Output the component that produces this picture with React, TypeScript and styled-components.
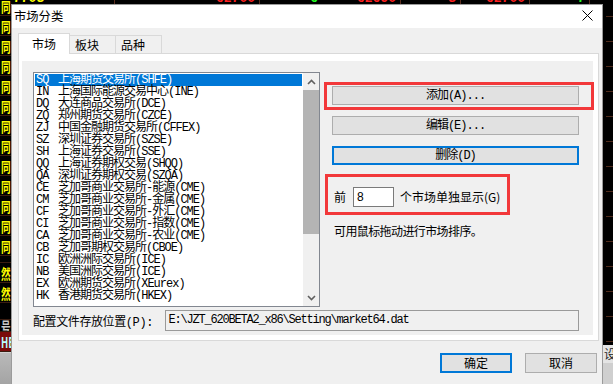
import React from 'react';
import styled, { createGlobalStyle } from 'styled-components';

const GlobalStyle = createGlobalStyle`
  html, body {
    margin: 0;
    padding: 0;
    background: #000;
    overflow: hidden;
  }
  * { box-sizing: border-box; }
`;

const SANS = `"Noto Sans CJK SC", "Noto Sans", sans-serif`;
const MIXED = `"Liberation Mono", "Noto Sans CJK SC", monospace`;

const markets: [string, string][] = [
  ['SQ', '上海期货交易所(SHFE)'],
  ['IN', '上海国际能源交易中心(INE)'],
  ['DQ', '大连商品交易所(DCE)'],
  ['ZQ', '郑州期货交易所(CZCE)'],
  ['ZJ', '中国金融期货交易所(CFFEX)'],
  ['SZ', '深圳证券交易所(SZSE)'],
  ['SH', '上海证券交易所(SSE)'],
  ['QQ', '上海证券期权交易(SHQQ)'],
  ['QA', '深圳证券期权交易(SZQA)'],
  ['CE', '芝加哥商业交易所-能源(CME)'],
  ['CM', '芝加哥商业交易所-金属(CME)'],
  ['CF', '芝加哥商业交易所-外汇(CME)'],
  ['CI', '芝加哥商业交易所-指数(CME)'],
  ['CA', '芝加哥商业交易所-农业(CME)'],
  ['CB', '芝加哥期权交易所(CBOE)'],
  ['IC', '欧洲洲际交易所(ICE)'],
  ['NB', '美国洲际交易所(ICE)'],
  ['EX', '欧洲期货交易所(XEurex)'],
  ['HK', '香港期货交易所(HKEX)'],
];

// the trading screen peeking out behind the dialog
const leftRows: { text: string; h: number; color: string; bg?: string }[] = [
  ...Array.from({ length: 13 }, () => ({ text: '同', h: 20, color: '#ffff00' })),
  { text: '', h: 7, color: '#ffff00' },
  { text: '然', h: 20, color: '#ffff00' },
  { text: '然', h: 20, color: '#ffff00' },
  { text: '', h: 17, color: '#ffff00' },
  { text: '号', h: 12, color: '#c8c8c8' },
  { text: 'HE', h: 20, color: '#b8ffff', bg: '#7a0b0b' },
];

const quoteCells: { w: number; parts: { t: string; c: string }[]; pad?: number }[] = [
  { w: 104, parts: [{ t: '7703', c: '#ffff00' }, { t: ' *', c: '#ff2020' }], pad: 2 },
  { w: 145, parts: [{ t: '62700', c: '#ff2020' }] },
  { w: 141, parts: [{ t: '6', c: '#20ff20' }, { t: '*    62690', c: '#ff2020' }] },
  { w: 60, parts: [{ t: '3', c: '#ff2020' }] },
  { w: 69, parts: [{ t: '62700', c: '#ff2020' }] },
  { w: 60, parts: [{ t: '7', c: '#20ff20' }] },
];

const Screen = styled.div`
  display: grid;
  grid-template-columns: 11px 592px 10px;
  grid-template-rows: 4px 380px;
  width: 613px;
  height: 384px;
  overflow: hidden;
  background: #000;
  position: relative;
`;

const LeftStrip = styled.div`
  grid-column: 1;
  grid-row: 1 / 3;
  display: flex;
  flex-direction: column;
  overflow: hidden;
  background: #000;
`;

const LeftRows = styled.div`
  display: flex;
  flex-direction: column;
  margin-top: -4px;
`;

const LeftCell = styled.div<{ $h: number; $color: string; $bg?: string }>`
  height: ${p => p.$h}px;
  padding-left: 1px;
  display: flex;
  align-items: center;
  color: ${p => p.$color};
  background: ${p => p.$bg || 'transparent'};
  border-bottom: 1px solid #3a1c10;
  overflow: hidden;
`;

const LeftGlyph = styled.span`
  display: inline-block;
  font-family: ${SANS};
  font-size: 12px;
  font-weight: bold;
  line-height: 12px;
  white-space: nowrap;
  transform: scale(0.8, 1.15);
  transform-origin: left center;
`;

const LeftFill = styled.div`
  flex: 1;
  background: linear-gradient(#b9b9b9, #a4a4a4);
  border-top: 1px solid #d0d0d0;
`;

const QuoteStrip = styled.div`
  grid-column: 2 / 4;
  grid-row: 1;
  display: flex;
  align-items: flex-end;
  overflow: hidden;
  background: #000;
`;

const QuoteCell = styled.div<{ $w: number; $pad?: number }>`
  flex: none;
  width: ${p => p.$w}px;
  height: 14px;
  margin-bottom: -2px;
  padding: 0 4px 0 ${p => p.$pad ?? 0}px;
  text-align: ${p => (p.$pad !== undefined ? 'left' : 'right')};
  border-right: 1px solid #5a2d1e;
  font-family: "Liberation Mono", monospace;
  font-weight: bold;
  font-size: 13px;
  line-height: 14px;
  white-space: pre;
`;

const QuotePart = styled.span<{ $c: string }>`
  color: ${p => p.$c};
`;

const RightStrip = styled.div`
  grid-column: 3;
  grid-row: 2;
  display: flex;
  flex-direction: column;
`;

const TickArea = styled.div`
  flex: 1;
  background-color: #000;
  background-image: linear-gradient(to bottom, #4e2a1a 0 1px, transparent 1px);
  background-size: 7px 25px;
  background-repeat: repeat-y;
  background-position: right 0 top 12px;
`;

const SetCell = styled.div`
  height: 18px;
  display: flex;
  align-items: center;
  background: #e4e4e4;
  color: #222;
  padding-left: 1px;
  overflow: hidden;
`;

const SetGlyph = styled.span`
  font-family: ${SANS};
  font-size: 12px;
  line-height: 12px;
  white-space: nowrap;
`;

const GrayFill = styled.div`
  height: 21px;
  background: #cfcfcf;
`;

const Dialog = styled.div`
  grid-column: 2;
  grid-row: 2;
  display: flex;
  flex-direction: column;
  background: #f0f0f0;
  border: 1px solid #9b9b9b;
  border-bottom: none;
  font-family: ${SANS};
  font-size: 12px;
  color: #000;
`;

const TitleBar = styled.div`
  height: 24px;
  display: flex;
  align-items: center;
  justify-content: space-between;
  background: #fff;
  padding: 0 9px 2px 2px;
`;

const Title = styled.span`
  font-size: 12.3px;
  line-height: 14px;
`;

const Body = styled.div`
  display: flex;
  flex-direction: column;
  padding: 5px 5px 0 6px;
`;

const TabStrip = styled.div`
  display: flex;
  align-items: flex-end;
  height: 20px;
`;

const Tab = styled.div<{ $active?: boolean; $w: number }>`
  position: relative;
  z-index: ${p => (p.$active ? 1 : 0)};
  width: ${p => p.$w}px;
  height: ${p => (p.$active ? 21 : 18)}px;
  margin-bottom: ${p => (p.$active ? -1 : 0)}px;
  background: ${p => (p.$active ? '#fff' : '#f0f0f0')};
  border: 1px solid #d9d9d9;
  border-bottom: none;
  border-left: ${p => (p.$active ? '1px solid #d9d9d9' : 'none')};
  display: flex;
  align-items: center;
  justify-content: ${p => (p.$active ? 'center' : 'flex-start')};
  padding-left: ${p => (p.$active ? 0 : 5)}px;
  font-size: 12px;
  line-height: 14px;
`;

const Panel = styled.div`
  width: 581px;
  border: 1px solid #d9d9d9;
  background: #fff;
  padding: 7px 5px 5px 3px;
`;

const Page = styled.div`
  position: relative;
  height: 274px;
  background: #f0f0f0;
  padding: 11px 0 0 11px;
  display: grid;
  grid-template-columns: 287px 247px;
  grid-template-rows: 235px auto;
  column-gap: 12px;
`;

const ListBox = styled.div`
  display: flex;
  border: 1px solid #828790;
  background: #fff;
  overflow: hidden;
`;

const Items = styled.div`
  flex: 1;
  padding: 1px 1px 0 1px;
  overflow: hidden;
`;

const Item = styled.div<{ $selected?: boolean }>`
  display: flex;
  height: 12px;
  line-height: 12px;
  padding-left: 1px;
  white-space: nowrap;
  font-family: ${MIXED};
  font-size: 12px;
  letter-spacing: -1px;
  background: ${p => (p.$selected ? '#0078d7' : 'transparent')};
  color: ${p => (p.$selected ? '#fff' : '#000')};
`;

const Code = styled.span`
  flex: none;
  width: 22px;
`;

const ScrollBar = styled.div`
  width: 16px;
  display: flex;
  flex-direction: column;
  background: #f0f0f0;
`;

const ScrollArrow = styled.div`
  height: 17px;
  display: flex;
  align-items: center;
  justify-content: center;
`;

const Thumb = styled.div`
  height: 144px;
  background: #b4b4b4;
`;

const Track = styled.div`
  flex: 1;
`;

const RightCol = styled.div`
  display: flex;
  flex-direction: column;
  padding-top: 14px;
`;

const Button = styled.div<{ $focus?: boolean }>`
  height: 19px;
  margin-bottom: 11px;
  display: flex;
  align-items: center;
  justify-content: center;
  background: #e1e1e1;
  border: ${p => (p.$focus ? '2px solid #0078d7' : '1px solid #adadad')};
  font-family: ${MIXED};
  font-size: 12px;
  letter-spacing: -1px;
  line-height: 12px;
  white-space: nowrap;
`;

const CountRow = styled.div`
  margin-top: 11px;
  height: 20px;
  display: flex;
  align-items: center;
  padding-left: 2px;
  line-height: 14px;
`;

const CountInput = styled.div`
  width: 41px;
  height: 20px;
  margin: 0 6px 0 7px;
  padding-left: 3px;
  background: #fff;
  border: 1px solid #7a7a7a;
  font-family: "Liberation Sans", sans-serif;
  font-size: 12px;
  line-height: 18px;
`;

const Hint = styled.div`
  margin-top: 18px;
  padding-left: 2px;
  line-height: 12px;
  letter-spacing: -0.6px;
`;

const ConfigRow = styled.div`
  grid-column: 1 / 3;
  margin-top: 3px;
  display: flex;
  align-items: center;
  height: 21px;
`;

const ConfigLabel = styled.span`
  width: 132px;
  font-family: ${MIXED};
  font-size: 12px;
  letter-spacing: -0.4px;
  white-space: nowrap;
`;

const PathField = styled.div`
  width: 416px;
  height: 21px;
  padding-left: 3px;
  background: #f0f0f0;
  border: 1px solid #9a9a9a;
  font-family: "Liberation Mono", monospace;
  font-size: 12px;
  letter-spacing: -1.2px;
  line-height: 19px;
  white-space: nowrap;
`;

const Footer = styled.div`
  display: flex;
  justify-content: flex-end;
  gap: 13px;
  margin-top: 12px;
`;

const FooterButton = styled(Button)`
  width: 72px;
  height: 20px;
  font-family: ${SANS};
  letter-spacing: 0;
  line-height: 14px;
`;

// red annotation boxes drawn over the screenshot
const Callout = styled.div<{ $x: number; $y: number; $w: number; $h: number }>`
  position: absolute;
  left: ${p => p.$x}px;
  top: ${p => p.$y}px;
  width: ${p => p.$w}px;
  height: ${p => p.$h}px;
  border: 3px solid #f2383a;
  pointer-events: none;
`;

const CloseIcon = () => (
  <svg width="11" height="11" viewBox="0 0 11 11">
    <path d="M0.5 0.5 L10.5 10.5 M10.5 0.5 L0.5 10.5" stroke="#000" strokeWidth="1" fill="none" />
  </svg>
);

const Chevron = ({ down }: { down?: boolean }) => (
  <svg width="9" height="6" viewBox="0 0 9 6">
    <polyline
      points={down ? '1,1 4.5,4.5 8,1' : '1,5 4.5,1.5 8,5'}
      stroke="#606060"
      strokeWidth="1.6"
      fill="none"
    />
  </svg>
);

export default function App() {
  return (
    <>
      <GlobalStyle />
      <Screen>
        <LeftStrip>
          <LeftRows>
            {leftRows.map((r, i) => (
              <LeftCell key={i} $h={r.h} $color={r.color} $bg={r.bg}>
                {r.text && <LeftGlyph>{r.text}</LeftGlyph>}
              </LeftCell>
            ))}
          </LeftRows>
          <LeftFill />
        </LeftStrip>

        <QuoteStrip>
          {quoteCells.map((c, i) => (
            <QuoteCell key={i} $w={c.w} $pad={c.pad}>
              {c.parts.map((p, j) => (
                <QuotePart key={j} $c={p.c}>{p.t}</QuotePart>
              ))}
            </QuoteCell>
          ))}
        </QuoteStrip>

        <Dialog>
          <TitleBar>
            <Title>市场分类</Title>
            <CloseIcon />
          </TitleBar>
          <Body>
            <TabStrip>
              <Tab $active $w={52}>市场</Tab>
              <Tab $w={46}>板块</Tab>
              <Tab $w={46}>品种</Tab>
            </TabStrip>
            <Panel>
              <Page>
                <ListBox>
                  <Items>
                    {markets.map(([code, name], i) => (
                      <Item key={code} $selected={i === 0}>
                        <Code>{code}</Code>
                        <span>{name}</span>
                      </Item>
                    ))}
                  </Items>
                  <ScrollBar>
                    <ScrollArrow><Chevron /></ScrollArrow>
                    <Thumb />
                    <Track />
                    <ScrollArrow><Chevron down /></ScrollArrow>
                  </ScrollBar>
                </ListBox>

                <RightCol>
                  <Button>添加(A)...</Button>
                  <Button>编辑(E)...</Button>
                  <Button $focus>删除(D)</Button>
                  <CountRow>
                    <span>前</span>
                    <CountInput>8</CountInput>
                    <span>个市场单独显示(G)</span>
                  </CountRow>
                  <Hint>可用鼠标拖动进行市场排序。</Hint>
                </RightCol>

                <ConfigRow>
                  <ConfigLabel>配置文件存放位置(P):</ConfigLabel>
                  <PathField>E:\JZT_620BETA2_x86\Setting\market64.dat</PathField>
                </ConfigRow>

                <Callout $x={302} $y={21} $w={270} $h={28} />
                <Callout $x={303} $y={113} $w={185} $h={41} />
              </Page>
            </Panel>
            <Footer>
              <FooterButton $focus>确定</FooterButton>
              <FooterButton>取消</FooterButton>
            </Footer>
          </Body>
        </Dialog>

        <RightStrip>
          <TickArea />
          <SetCell><SetGlyph>设</SetGlyph></SetCell>
          <GrayFill />
        </RightStrip>
      </Screen>
    </>
  );
}
